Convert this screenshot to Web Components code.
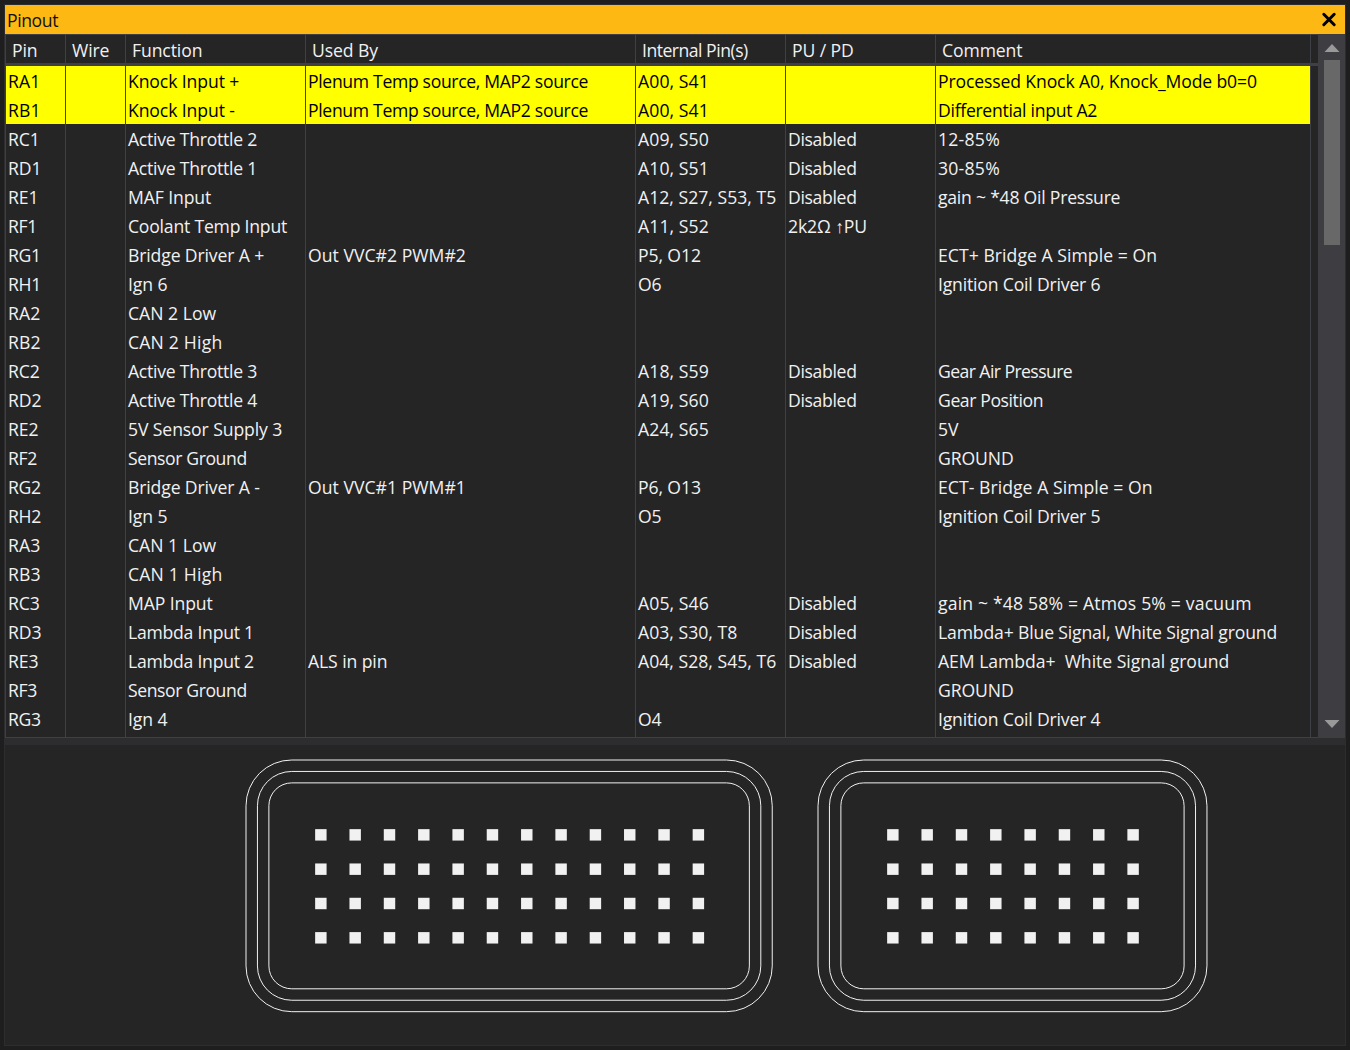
<!DOCTYPE html>
<html lang="en">
<head>
<meta charset="utf-8">
<title>Pinout</title>
<style>
  html, body {
    height: 100%;
  }
  body {
    background-color: #1e1e1e;
    box-sizing: border-box;
    color: #f1f1f1;
    font-family: "Open Sans", "Noto Sans", sans-serif;
    font-size: 17.6px;
    margin: 0;
    overflow: hidden;
    padding: 4px;
  }
</style>
</head>
<body>
<tool-window name="Pinout">
  <pin-table slot="top"></pin-table>
  <scroll-bar slot="scroll"></scroll-bar>
  <connector-view slot="bottom"></connector-view>
</tool-window>

<script>
const windowTemplate = document.createElement('template')

windowTemplate.innerHTML = `
  <style>
    :host {
      background-color: #252526;
      border: 1px solid #2d2d30;
      box-sizing: border-box;
      display: grid;
      grid-template-rows: 29px 704px 7px 300px;
      width: 1342px;
    }
    .title {
      align-items: center;
      background-color: #fdb813;
      color: #111;
      display: flex;
      justify-content: space-between;
      line-height: 29px;
      padding: 0 8px 0 2px;
    }
    .title span {
      letter-spacing: -0.4px;
      padding-top: 2px;
    }
    .title svg {
      display: block;
    }
    .top {
      display: grid;
      grid-template-columns: 1313px 27px;
      overflow: hidden;
    }
    .splitter {
      background-color: #2d2d30;
    }
  </style>

  <div class="title">
    <span></span>
    <svg width="16" height="16" viewBox="0 0 16 16">
      <path d="M2.8 2.3L13.2 12.7M13.2 2.3L2.8 12.7" stroke="#000" stroke-width="3" stroke-linecap="round"/>
    </svg>
  </div>
  <div class="top"><slot name="top"></slot><slot name="scroll"></slot></div>
  <div class="splitter"></div>
  <slot name="bottom"></slot>
`

class ToolWindow extends HTMLElement {
  constructor() {
    super()
    this.attachShadow({ mode: 'open' })
    this.shadowRoot.appendChild(windowTemplate.content.cloneNode(true))
    this.shadowRoot.querySelector('.title span').textContent = this.getAttribute('name')
  }
}

const rowTemplate = document.createElement('template')

rowTemplate.innerHTML = `
  <style>
    :host {
      display: grid;
      grid-template-columns: 60px 60px 180px 330px 150px 150px 375px;
      height: 29px;
      line-height: 29px;
    }
    div {
      border-right: 1px solid #3f3f46;
      letter-spacing: -0.1px;
      overflow: hidden;
      padding: 1px 0 0 2px;
      white-space: pre;
    }
    :host([marked]) {
      color: #000;
    }
    :host([marked]) div {
      background-color: #ff0;
    }
    :host([heading]) {
      border-bottom: 3px solid #3f3f46;
      height: 28px;
    }
    :host([heading]) div {
      padding-left: 6px;
    }
  </style>
`

// letter spacing for labels that run wide or narrow, first match wins
const tracking = [
  [/^Plenum/, -0.33],
  [/^Processed/, -0.13],
  [/^Differential/, -0.29],
  [/^Active Throttle/, -0.25],
  [/Oil Pressure$/, -0.23],
  [/^Coolant/, -0.21],
  [/^Out VVC/, 0.03],
  [/^ECT/, 0.05],
  [/^Ignition/, -0.18],
  [/^CAN . Low/, 0.02],
  [/^CAN . High/, 0.2],
  [/^Disabled/, -0.33],
  [/^Gear Air/, -0.57],
  [/^Gear Pos/, -0.4],
  [/^Sensor Ground/, -0.4],
  [/^\d\d-85%/, 0.25],
  [/^A\d\d, S\d\d$/, 0.1],
  [/^A\d\d, /, 0.02],
  [/vacuum$/, 0.17],
  [/^Lambda\+/, -0.15],
  [/^AEM/, -0.03],
  [/^Lambda Input/, -0.24],
  [/^Bridge/, -0.13],
  [/^Internal/, -0.5],
  [/^R[FGH]\d/, -0.35],
  [/^R[AB]\d/, 0.1]
]

class PinRow extends HTMLElement {
  constructor() {
    super()
    this.attachShadow({ mode: 'open' })
    this.shadowRoot.appendChild(rowTemplate.content.cloneNode(true))
  }

  // one cell per column, empty ones included so the grid lines run through
  set cells(values) {
    values.forEach(value => {
      const cell = document.createElement('div')
      const match = tracking.find(([pattern]) => pattern.test(value))
      cell.textContent = value
      if (match) cell.style.letterSpacing = `${match[1]}px`
      this.shadowRoot.appendChild(cell)
    })
  }
}

const headings = ['Pin', 'Wire', 'Function', 'Used By', 'Internal Pin(s)', 'PU / PD', 'Comment']

// pin, wire, function, used by, internal pins, pull up / down, comment
const pins = [
  ['RA1', '', 'Knock Input +', 'Plenum Temp source, MAP2 source', 'A00, S41', '', 'Processed Knock A0, Knock_Mode b0=0'],
  ['RB1', '', 'Knock Input -', 'Plenum Temp source, MAP2 source', 'A00, S41', '', 'Differential input A2'],
  ['RC1', '', 'Active Throttle 2', '', 'A09, S50', 'Disabled', '12-85%'],
  ['RD1', '', 'Active Throttle 1', '', 'A10, S51', 'Disabled', '30-85%'],
  ['RE1', '', 'MAF Input', '', 'A12, S27, S53, T5', 'Disabled', 'gain ~ *48 Oil Pressure'],
  ['RF1', '', 'Coolant Temp Input', '', 'A11, S52', '2k2Ω ↑PU', ''],
  ['RG1', '', 'Bridge Driver A +', 'Out VVC#2 PWM#2', 'P5, O12', '', 'ECT+ Bridge A Simple = On'],
  ['RH1', '', 'Ign 6', '', 'O6', '', 'Ignition Coil Driver 6'],
  ['RA2', '', 'CAN 2 Low', '', '', '', ''],
  ['RB2', '', 'CAN 2 High', '', '', '', ''],
  ['RC2', '', 'Active Throttle 3', '', 'A18, S59', 'Disabled', 'Gear Air Pressure'],
  ['RD2', '', 'Active Throttle 4', '', 'A19, S60', 'Disabled', 'Gear Position'],
  ['RE2', '', '5V Sensor Supply 3', '', 'A24, S65', '', '5V'],
  ['RF2', '', 'Sensor Ground', '', '', '', 'GROUND'],
  ['RG2', '', 'Bridge Driver A -', 'Out VVC#1 PWM#1', 'P6, O13', '', 'ECT- Bridge A Simple = On'],
  ['RH2', '', 'Ign 5', '', 'O5', '', 'Ignition Coil Driver 5'],
  ['RA3', '', 'CAN 1 Low', '', '', '', ''],
  ['RB3', '', 'CAN 1 High', '', '', '', ''],
  ['RC3', '', 'MAP Input', '', 'A05, S46', 'Disabled', 'gain ~ *48 58% = Atmos 5% = vacuum'],
  ['RD3', '', 'Lambda Input 1', '', 'A03, S30, T8', 'Disabled', 'Lambda+ Blue Signal, White Signal ground'],
  ['RE3', '', 'Lambda Input 2', 'ALS in pin', 'A04, S28, S45, T6', 'Disabled', 'AEM Lambda+  White Signal ground'],
  ['RF3', '', 'Sensor Ground', '', '', '', 'GROUND'],
  ['RG3', '', 'Ign 4', '', 'O4', '', 'Ignition Coil Driver 4'],
  ['', '', '', '', '', '', '']
]

class PinTable extends HTMLElement {
  constructor() {
    super()
    this.attachShadow({ mode: 'open' })
    this.shadowRoot.innerHTML = `
      <style>
        :host {
          border: 1px solid #3f3f46;
          border-right: none;
          box-sizing: border-box;
          display: block;
          height: 704px;
          overflow: hidden;
        }
      </style>
    `
    this.addRow(headings, 'heading')
    pins.forEach((pin, index) => this.addRow(pin, index < 2 ? 'marked' : ''))
  }

  addRow(values, flag) {
    const row = document.createElement('pin-row')
    row.cells = values
    if (flag) row.setAttribute(flag, '')
    this.shadowRoot.appendChild(row)
  }
}

const scrollTemplate = document.createElement('template')

scrollTemplate.innerHTML = `
  <style>
    :host {
      align-items: center;
      background-color: #3e3e42;
      box-sizing: border-box;
      display: flex;
      flex-direction: column;
      height: 704px;
      padding: 10px 0 10px 1px;
    }
    svg {
      display: block;
      fill: #999;
    }
    .thumb {
      background-color: #686868;
      height: 185px;
      margin: 8px 0 auto;
      width: 16px;
    }
  </style>
  <svg width="16" height="8" viewBox="0 0 16 8"><path d="M0.5 8L8 0L15.5 8Z"/></svg>
  <div class="thumb"></div>
  <svg width="16" height="8" viewBox="0 0 16 8"><path d="M0.5 0L8 8L15.5 0Z"/></svg>
`

class ScrollBar extends HTMLElement {
  constructor() {
    super()
    this.attachShadow({ mode: 'open' })
    this.shadowRoot.appendChild(scrollTemplate.content.cloneNode(true))
  }
}

// size of one pin, everything in the drawing is a multiple of it
const unit = 11.44

class ConnectorView extends HTMLElement {
  constructor() {
    super()
    this.attachShadow({ mode: 'open' })
    this.shadowRoot.innerHTML = `
      <style>
        :host {
          display: block;
        }
        svg {
          display: block;
        }
        .shell {
          fill: none;
          stroke: #f1f1f1;
          stroke-width: 1;
        }
        .pin {
          fill: #f1f1f1;
        }
      </style>
      <svg width="1340" height="300" viewBox="0 0 1340 300">
        ${this.connector(241, 15, 12)}
        ${this.connector(241 + 50 * unit, 15, 8)}
      </svg>
    `
  }

  connector(x, y, columns) {
    const width = (columns * 3 + 10) * unit
    const height = 22 * unit
    let shapes = ''
    for (let i = 0; i < 3; i++) {
      const inset = i * unit
      shapes += `<rect class="shell" x="${x + inset}" y="${y + inset}" width="${width - inset * 2}" height="${height - inset * 2}" rx="${(4 - i) * unit}"/>`
    }
    for (let row = 0; row < 4; row++) {
      for (let col = 0; col < columns; col++) {
        shapes += `<rect class="pin" x="${x + 0.5 + (6 + col * 3) * unit}" y="${y + 0.5 + (6 + row * 3) * unit}" width="${unit}" height="${unit}"/>`
      }
    }
    return shapes
  }
}

window.customElements.define('pin-row', PinRow)
window.customElements.define('pin-table', PinTable)
window.customElements.define('scroll-bar', ScrollBar)
window.customElements.define('connector-view', ConnectorView)
window.customElements.define('tool-window', ToolWindow)
</script>
</body>
</html>
